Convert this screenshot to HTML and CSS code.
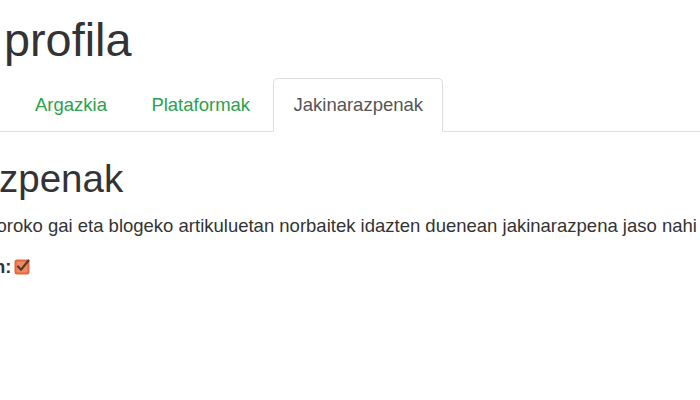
FILE: index.html
```html
<!DOCTYPE html>
<html lang="eu">
<head>
<meta charset="utf-8">
<title>Profila</title>
<link rel="stylesheet" href="styles.css">
</head>
<body>
<div class="page">
  <h1 class="title">profila</h1>
  <ul class="tabs">
    <li class="tab"><a href="#">Argazkia</a></li>
    <li class="tab"><a href="#">Plataformak</a></li>
    <li class="tab active"><a href="#">Jakinarazpenak</a></li>
  </ul>
  <div class="pane">
    <h2 class="pane-title">zpenak</h2>
    <p class="desc">oroko gai eta blogeko artikuluetan norbaitek idazten duenean jakinarazpena jaso nahi</p>
    <div class="field">
      <span class="label">n:</span>
      <svg class="check" width="17" height="17" viewBox="0 0 17 17" aria-hidden="true">
        <rect x="0.5" y="1.5" width="15" height="15" rx="2.5" fill="#e5683d"/>
        <rect x="2.5" y="3.5" width="11" height="11" rx="1" fill="#f08a63"/>
        <path d="M4 8.5 L7 11.8 L14.5 2.5" fill="none" stroke="#5a3a2e" stroke-width="2.2" stroke-linecap="round" stroke-linejoin="round"/>
      </svg>
    </div>
  </div>
</div>
</body>
</html>
```
FILE: styles.css
```css
html, body {
  margin: 0;
  padding: 0;
  background: #fff;
}
body {
  font-family: "Liberation Sans", Arial, sans-serif;
  color: #333;
  overflow: hidden;
  width: 700px;
  height: 400px;
}
.page {
  display: flex;
  flex-direction: column;
}
.title {
  font-size: 46.8px;
  font-weight: 500;
  line-height: 1.1;
  margin: 15px 0 12px;
  padding-left: 4px;
}
.tabs {
  display: flex;
  list-style: none;
  margin: 0;
  padding: 0 0 0 14px;
  border-bottom: 1px solid #ddd;
}
.tab {
  margin: 0 2.4px -1px 0;
}
.tab a {
  display: block;
  padding: 13px 20px;
  font-size: 18.5px;
  line-height: 26px;
  color: #2ba24c;
  text-decoration: none;
  border: 1px solid transparent;
  border-radius: 5px 5px 0 0;
}
.tab.active a {
  color: #555;
  background: #fff;
  border-color: #ddd #ddd transparent;
  padding-left: 19px;
  padding-right: 19px;
}
.pane {
  display: flex;
  flex-direction: column;
}
.pane-title {
  font-size: 38.5px;
  font-weight: 500;
  line-height: 1.1;
  margin: 26px 0 12px;
  text-indent: -1px;
}
.desc {
  font-size: 18.5px;
  line-height: 26px;
  margin: 0 0 15px;
  white-space: nowrap;
  text-indent: -3.5px;
}
.field {
  display: flex;
  align-items: center;
  gap: 3px;
  margin-left: -6px;
}
.label {
  font-size: 18.5px;
  line-height: 26px;
  font-weight: bold;
}
.check {
  display: block;
}
```
